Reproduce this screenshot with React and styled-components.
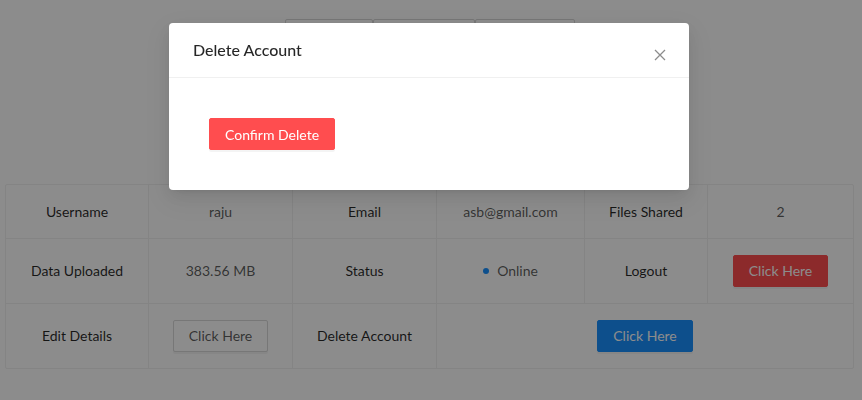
import React from 'react';
import styled, { createGlobalStyle } from 'styled-components';

const Global = createGlobalStyle`
  body {
    margin: 0;
    background: #fff;
    font-family: Lato, "Liberation Sans", sans-serif;
    font-size: 14px;
    color: rgba(0, 0, 0, 0.85);
  }
`;

const Page = styled.div`
  width: 862px;
  height: 400px;
  padding: 19px 8px 0 5px;
  box-sizing: border-box;
`;

const Nav = styled.div`
  display: flex;
  justify-content: center;
`;

const NavButton = styled.button`
  width: ${({w}) => w}px;
  height: 32px;
  border: 1px solid #d9d9d9;
  border-radius: 2px;
  background: #fff;
  font: inherit;
  color: rgba(0, 0, 0, 0.85);
`;

const Table = styled.table`
  margin-top: 133px;
  width: 849px;
  border-collapse: separate;
  border-spacing: 0;
  border: 1px solid #f0f0f0;
  border-radius: 2px;
  table-layout: fixed;
`;

const Cell = styled.td`
  padding: 0 8px;
  height: ${({tall}) => tall ? 64 : 53}px;
  text-align: center;
  line-height: 22px;
  color: ${({label}) => label ? 'rgba(0,0,0,0.85)' : 'rgba(0,0,0,0.65)'};
  border-right: ${({last}) => last ? 'none' : '1px solid #f0f0f0'};
  border-bottom: ${({bottom}) => bottom ? 'none' : '1px solid #f0f0f0'};
`;

const Btn = styled.button`
  height: 32px;
  padding: 4px 15px;
  font: inherit;
  border-radius: 2px;
  cursor: pointer;
  border: 1px solid ${({kind}) => kind === 'danger' ? '#ff4d4f' : kind === 'primary' ? '#1890ff' : '#d9d9d9'};
  background: ${({kind}) => kind === 'danger' ? '#ff4d4f' : kind === 'primary' ? '#1890ff' : '#fff'};
  color: ${({kind}) => kind ? '#fff' : 'rgba(0,0,0,0.65)'};
  box-shadow: 0 2px 0 rgba(0, 0, 0, 0.045);
`;

const Dot = styled.span`
  display: inline-block;
  width: 6px;
  height: 6px;
  border-radius: 50%;
  background: #1890ff;
  margin-right: 8px;
  vertical-align: middle;
  position: relative;
  top: -1px;
`;

const Mask = styled.div`
  position: fixed;
  inset: 0;
  background: rgba(0, 0, 0, 0.45);
`;

const Modal = styled.div`
  position: fixed;
  top: 23px;
  left: 169px;
  width: 520px;
  background: #fff;
  border-radius: 4px;
  box-shadow: 0 3px 6px -4px rgba(0,0,0,.12), 0 6px 16px 0 rgba(0,0,0,.08), 0 9px 28px 8px rgba(0,0,0,.05);
`;

const Header = styled.div`
  padding: 16px 24px;
  border-bottom: 1px solid #f0f0f0;
  font-size: 16px;
  font-weight: 500;
  line-height: 22px;
  color: rgba(0, 0, 0, 0.85);
`;

const Close = styled.button`
  position: absolute;
  top: 24px;
  right: 21px;
  width: 16px;
  height: 16px;
  padding: 0;
  border: none;
  background: none;
  display: flex;
  align-items: center;
  justify-content: center;
`;

const Body = styled.div`
  padding: 40px 40px 40px;
`;

export default function App() {
  return (
    <>
      <Global />
      <Page>
        <Nav>
          <NavButton w={88}>Profile</NavButton>
          <NavButton w={102}>My Uploads</NavButton>
          <NavButton w={100}>Shared</NavButton>
        </Nav>
        <Table>
          <colgroup>
            <col style={{width: 143}} />
            <col style={{width: 144}} />
            <col style={{width: 144}} />
            <col style={{width: 148}} />
            <col style={{width: 123}} />
            <col />
          </colgroup>
          <tbody>
            <tr>
              <Cell label>Username</Cell>
              <Cell>raju</Cell>
              <Cell label>Email</Cell>
              <Cell>asb@gmail.com</Cell>
              <Cell label>Files Shared</Cell>
              <Cell last>2</Cell>
            </tr>
            <tr>
              <Cell label tall>Data Uploaded</Cell>
              <Cell tall>383.56 MB</Cell>
              <Cell label tall>Status</Cell>
              <Cell tall><Dot />Online</Cell>
              <Cell label tall>Logout</Cell>
              <Cell tall last><Btn kind="danger">Click Here</Btn></Cell>
            </tr>
            <tr>
              <Cell label tall bottom>Edit Details</Cell>
              <Cell tall bottom><Btn>Click Here</Btn></Cell>
              <Cell label tall bottom>Delete Account</Cell>
              <Cell tall bottom last colSpan={3}><Btn kind="primary">Click Here</Btn></Cell>
            </tr>
          </tbody>
        </Table>
      </Page>
      <Mask />
      <Modal>
        <Header>Delete Account</Header>
        <Close aria-label="Close">
          <svg width="12" height="12" viewBox="0 0 12 12">
            <path d="M1 1 L11 11 M11 1 L1 11" stroke="rgba(0,0,0,0.45)" strokeWidth="1.3" fill="none" />
          </svg>
        </Close>
        <Body>
          <Btn kind="danger">Confirm Delete</Btn>
        </Body>
      </Modal>
    </>
  );
}
